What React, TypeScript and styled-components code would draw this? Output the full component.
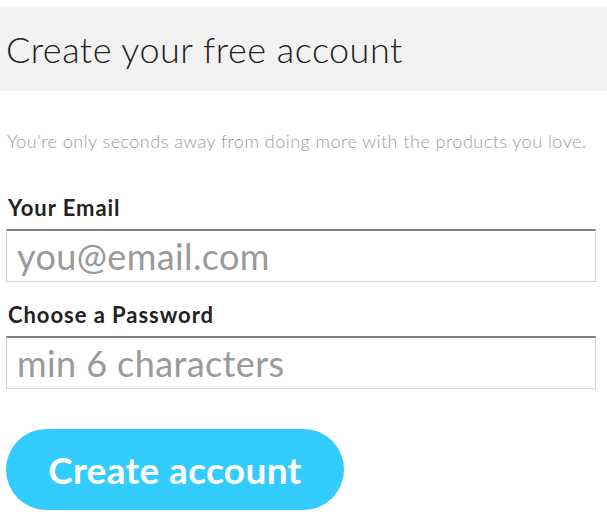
import React from "react";
import styled, { createGlobalStyle } from "styled-components";

const GlobalStyle = createGlobalStyle`
    html, body {
        margin: 0;
        padding: 0;
        background: #ffffff;
    }
    body {
        font-family: Lato, "Noto Sans", sans-serif;
    }
`;

const Page = styled.div`
    width: 607px;
    padding-top: 7px;
`;

const Header = styled.div`
    background: #f2f2f2;
    height: 84px;
    display: flex;
    align-items: center;
    padding-left: 6px;

    h1 {
        margin: 0;
        font-size: 36px;
        font-weight: 300;
        color: #222;
        letter-spacing: 0.5px;
    }
`;

const Subtitle = styled.p`
    margin: 39px 0 0 7px;
    font-size: 18px;
    line-height: 22px;
    color: #999ba2;
    font-weight: 300;
    letter-spacing: 0.48px;
`;

const Form = styled.form`
    display: flex;
    flex-direction: column;
    padding: 0 11px 0 6px;
    margin-top: 43px;
`;

const Label = styled.label`
    display: block;
    font-size: 22px;
    font-weight: 700;
    color: #222;
    margin: 0 0 8px 2px;
    line-height: 26px;
    letter-spacing: 0.95px;
`;

const Input = styled.input`
    box-sizing: border-box;
    width: 100%;
    height: 53px;
    border: 1px solid #d4d4d4;
    border-top: 2px solid #7f7f7f;
    padding: 0 10px;
    font-family: Lato, "Noto Sans", sans-serif;
    font-size: 36px;
    font-weight: 400;
    letter-spacing: 0.4px;
    color: #333;
    margin-bottom: 20px;
    outline: none;

    &::placeholder {
        color: #9a9a9a;
    }
`;

const Button = styled.button`
    margin-top: 20px;
    width: 338px;
    height: 81px;
    border: none;
    border-radius: 41px;
    background: #33ccff;
    color: #ffffff;
    font-family: Lato, "Noto Sans", sans-serif;
    font-size: 37px;
    font-weight: 700;
    letter-spacing: 0.35px;
    cursor: pointer;
`;

const App = () => {
	return (
		<>
			<GlobalStyle />
			<Page>
				<Header>
					<h1>Create your free account</h1>
				</Header>
				<Subtitle>
					You're only seconds away from doing more with the products you love.
				</Subtitle>
				<Form onSubmit={(e) => e.preventDefault()}>
					<Label htmlFor="email">Your Email</Label>
					<Input id="email" type="email" placeholder="you@email.com" />
					<Label htmlFor="password">Choose a Password</Label>
					<Input id="password" type="password" placeholder="min 6 characters" />
					<Button type="submit">Create account</Button>
				</Form>
			</Page>
		</>
	);
};

export default App;
